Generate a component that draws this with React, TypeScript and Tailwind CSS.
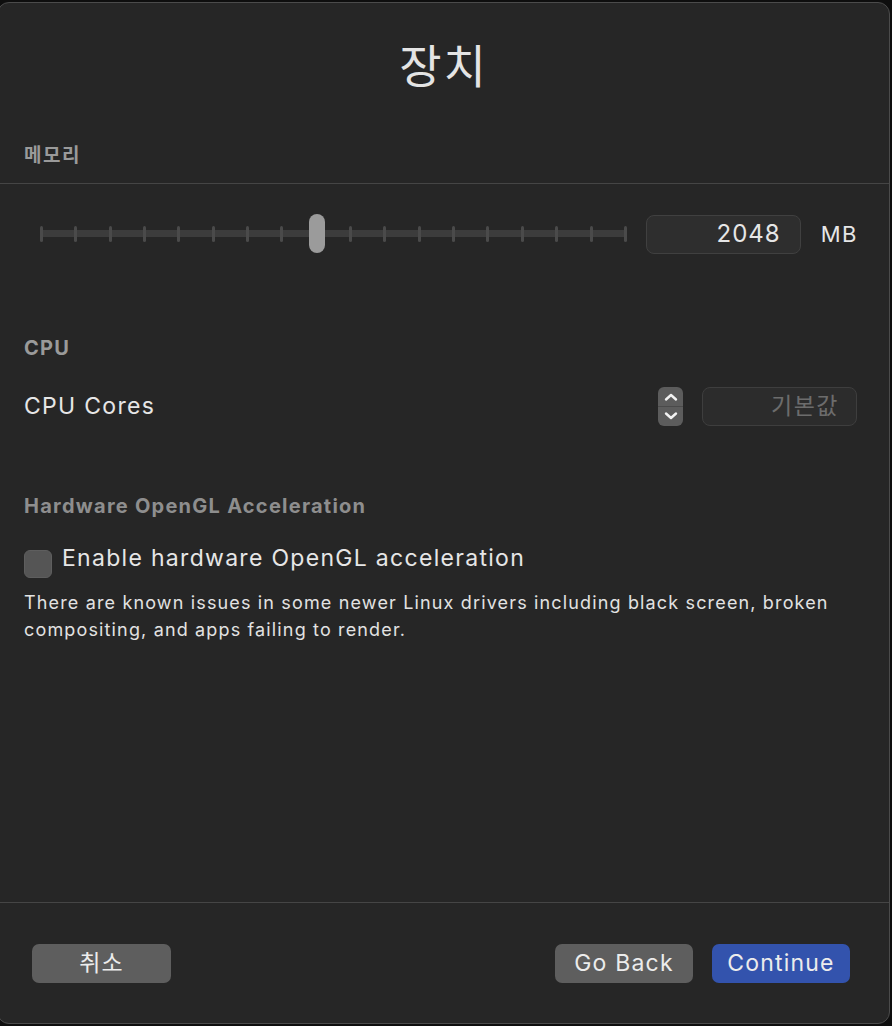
const font = { fontFamily: '"Inter", "Noto Sans CJK KR", sans-serif' };

function Slider() {
  const ticks = Array.from({ length: 18 });
  return (
    <div className="relative w-[587px] h-[40px] flex items-center shrink-0">
      <div className="absolute left-0 right-0 top-[16px] h-[7px] bg-[#3c3c3c] rounded-[2px]" />
      <div className="relative w-full flex justify-between items-center">
        {ticks.map((_, i) => (
          <div key={i} className="w-[3px] h-[16px] rounded-full bg-[#4a4a4a]" />
        ))}
      </div>
      <div className="absolute left-[269px] top-0 w-[16px] h-[39px] rounded-full bg-[#9b9b9b]" />
    </div>
  );
}

function Stepper() {
  return (
    <div className="w-[25px] h-[39px] rounded-[6px] bg-[#5c5c5c] flex flex-col items-center justify-between py-[5px] shrink-0">
      <svg width="14" height="10" viewBox="0 0 14 10">
        <path d="M2 7.5 L7 3 L12 7.5" stroke="#f2f2f2" strokeWidth="2.4" fill="none" strokeLinecap="round" strokeLinejoin="round" />
      </svg>
      <div className="w-full h-px bg-[#4a4a4a]" />
      <svg width="14" height="10" viewBox="0 0 14 10">
        <path d="M2 2.5 L7 7 L12 2.5" stroke="#f2f2f2" strokeWidth="2.4" fill="none" strokeLinecap="round" strokeLinejoin="round" />
      </svg>
    </div>
  );
}

export default function App() {
  return (
    <div className="w-[892px] h-[1026px] bg-[#0e0e0e] overflow-hidden pt-[2px]" style={font}>
      <div className="-ml-[3px] w-[893px] h-[1022px] bg-[#262626] border border-[#4b4b4b] rounded-[12px] flex flex-col">
        <div className="pt-[33px] text-center text-[46px] leading-[60px] tracking-[2px] text-[#e4e4e4]">장치</div>

        <div className="mt-[48px] pl-[26px] text-[19px] leading-[24px] tracking-[1.5px] font-semibold text-[#9a9a9a]">메모리</div>
        <div className="mt-[15px] border-t border-[#454545]" />

        <div className="mt-[30px] pl-[42px] pr-[31px] flex items-center">
          <Slider />
          <div className="ml-[19px] w-[156px] h-[39px] rounded-[8px] bg-[#2e2e2e] border border-[#404040] flex items-center justify-end pr-[19px] text-[24px] tracking-[1px] text-[#e6e6e6]">
            2048
          </div>
          <div className="ml-[20px] text-[22px] tracking-[1.5px] text-[#e6e6e6]">MB</div>
        </div>

        <div className="mt-[82px] pl-[26px] text-[20px] leading-[24px] tracking-[1.2px] font-bold text-[#9a9a9a]">CPU</div>
        <div className="mt-[27px] pl-[26px] pr-[32px] h-[39px] flex items-center">
          <div className="text-[23px] tracking-[1.3px] text-[#e6e6e6]">CPU Cores</div>
          <div className="ml-auto flex items-center gap-[19px]">
            <Stepper />
            <div className="w-[155px] h-[39px] rounded-[8px] bg-[#2c2c2c] border border-[#3e3e3e] flex items-center justify-end pr-[17px] text-[23px] tracking-[1.5px] text-[#6c6c6c]">
              기본값
            </div>
          </div>
        </div>

        <div className="mt-[68px] pl-[26px] text-[20px] leading-[24px] tracking-[1.25px] font-bold text-[#8e8e8e]">Hardware OpenGL Acceleration</div>
        <div className="mt-[31px] pl-[26px] h-[29px] flex items-center gap-[10px]">
          <div className="w-[28px] h-[28px] rounded-[6px] bg-[#555555] border border-[#5e5e5e]" />
          <div className="pb-[10px] text-[23px] tracking-[1.3px] text-[#e6e6e6]">Enable hardware OpenGL acceleration</div>
        </div>
        <div className="mt-[11px] pl-[26px] pr-[30px] text-[18px] leading-[27px] tracking-[1.15px] text-[#e2e2e2]">
          There are known issues in some newer Linux drivers including black screen, broken compositing, and apps failing to render.
        </div>

        <div className="flex-1" />

        <div className="border-t border-[#454545] pt-[41px] pb-[40px] pl-[34px] pr-[39px] flex items-center">
          <button className="w-[139px] h-[39px] rounded-[7px] bg-[#5e5e5e] text-[23px] tracking-[1.2px] text-[#ececec]">취소</button>
          <div className="ml-auto flex gap-[19px]">
            <button className="w-[138px] h-[39px] rounded-[7px] bg-[#5e5e5e] text-[23px] tracking-[1.2px] text-[#ececec]">Go Back</button>
            <button className="w-[138px] h-[39px] rounded-[7px] bg-[#3353ad] text-[23px] tracking-[1.2px] text-[#ececec]">Continue</button>
          </div>
        </div>
      </div>
    </div>
  );
}
